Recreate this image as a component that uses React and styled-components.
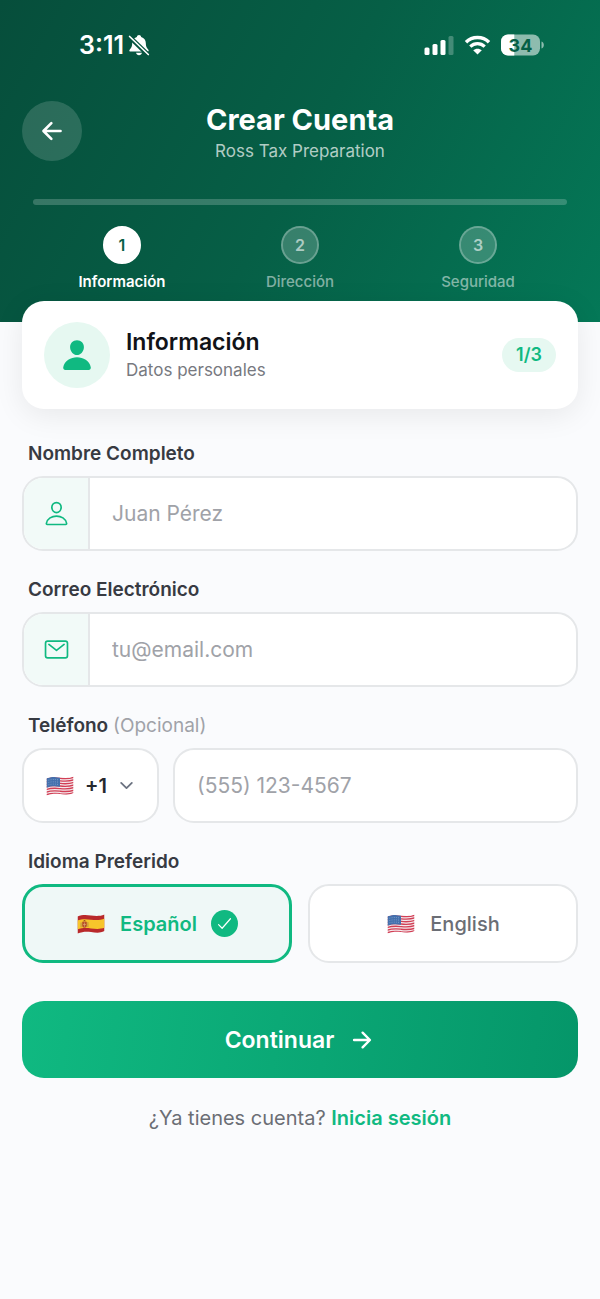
import { useState } from 'react';
import styled, { createGlobalStyle, css } from 'styled-components';
import {
  IoArrowBack,
  IoArrowForward,
  IoCheckmark,
  IoChevronDown,
  IoMailOutline,
  IoPerson,
  IoPersonOutline,
} from 'react-icons/io5';


const GlobalStyle = createGlobalStyle`
  * {
    box-sizing: border-box;
  }

  body {
    margin: 0;
    background: #fafbfd;
    font-family: Inter, 'Noto Sans', sans-serif;
    color: #374151;
  }

  button, input, select {
    font-family: inherit;
  }
`;

const Page = styled.div`
  min-height: 100vh;
  background: #fafbfd;
`;

const Header = styled.header`
  height: 322px;
  display: flex;
  flex-direction: column;
  background: linear-gradient(118deg, #064e3b 0%, #065f46 50%, #047857 100%);
  color: #ffffff;
`;

const StatusBar = styled.div`
  display: flex;
  justify-content: space-between;
  align-items: center;
  height: 89px;
  padding: 0 56px 0 79px;
`;

const StatusGroup = styled.div`
  display: flex;
  align-items: center;
  gap: ${(props) => props.$gap};
`;

const Clock = styled.time`
  font-size: 25px;
  font-weight: 600;
  line-height: 28px;
`;

const TitleBar = styled.div`
  display: grid;
  grid-template-columns: 60px 1fr 60px;
  align-items: center;
  height: 84px;
  padding: 0 22px;
`;

const BackButton = styled.button`
  display: flex;
  align-items: center;
  justify-content: center;
  width: 60px;
  height: 60px;
  padding: 0;
  border: none;
  border-radius: 50%;
  background: rgba(255, 255, 255, 0.15);
  color: #ffffff;
  font-size: 28px;
  cursor: pointer;
`;

const Heading = styled.div`
  padding-top: 4px;
  text-align: center;
`;

const Title = styled.h1`
  margin: 0;
  font-size: 29px;
  font-weight: 700;
  line-height: 36px;
`;

const Subtitle = styled.p`
  margin: 0;
  font-size: 17px;
  line-height: 26px;
  color: rgba(255, 255, 255, 0.7);
`;

const Progress = styled.div`
  height: 6px;
  margin: 26px 33px 21px;
  border-radius: 3px;
  background: rgba(255, 255, 255, 0.2);
`;

const Steps = styled.ol`
  display: grid;
  grid-template-columns: repeat(3, 1fr);
  margin: 0;
  padding: 0 33px;
  list-style: none;
`;

const Step = styled.li`
  display: flex;
  flex-direction: column;
  align-items: center;
  gap: 8px;
  font-size: 15px;
  line-height: 20px;
  font-weight: ${(props) => (props.$active ? 600 : 500)};
  color: ${(props) => (props.$active ? '#ffffff' : 'rgba(255, 255, 255, 0.5)')};
`;

const StepNumber = styled.span`
  display: flex;
  align-items: center;
  justify-content: center;
  width: 38px;
  height: 38px;
  border: 2px solid rgba(255, 255, 255, 0.4);
  border-radius: 50%;
  background: rgba(255, 255, 255, 0.2);
  background-clip: padding-box;
  font-size: 16px;
  font-weight: 600;
  color: rgba(255, 255, 255, 0.6);

  ${(props) => props.$active && css`
    border-color: #ffffff;
    background: #ffffff;
    color: #065f46;
  `}
`;

const Content = styled.main`
  position: relative;
  margin-top: -21px;
  padding: 0 22px 40px;
`;

const StepCard = styled.section`
  display: flex;
  align-items: center;
  gap: 16px;
  padding: 21px 22px;
  border-radius: 22px;
  background: #ffffff;
  box-shadow: 0 6px 30px rgba(0, 0, 0, 0.08);
`;

const Avatar = styled.div`
  display: flex;
  align-items: center;
  justify-content: center;
  width: 66px;
  height: 66px;
  border-radius: 50%;
  background: #e6f8f1;
  color: #10b981;
  font-size: 34px;
`;

const CardText = styled.div`
  flex: 1;
`;

const CardTitle = styled.h2`
  margin: 0;
  font-size: 23px;
  font-weight: 600;
  line-height: 30px;
  color: #111318;
`;

const CardDetail = styled.p`
  margin: 0;
  font-size: 17px;
  line-height: 26px;
  color: #77797f;
`;

const Badge = styled.span`
  padding: 0 14px;
  border-radius: 17px;
  background: #e6f8f1;
  color: #10b981;
  font-size: 18px;
  font-weight: 600;
  line-height: 34px;
`;

const Form = styled.form`
  display: flex;
  flex-direction: column;
  gap: 23px;
  padding-top: 29px;
`;

const Field = styled.div`
  display: flex;
  flex-direction: column;
  gap: 7px;
`;

const labelText = css`
  padding: 0 6px;
  font-size: 19px;
  font-weight: 600;
  line-height: 31px;
  color: #373a42;
`;

const Label = styled.label`
  ${labelText}
`;

const Optional = styled.span`
  font-weight: 400;
  color: #a0a2a8;
`;

const InputBox = styled.div`
  display: flex;
  width: 100%;
  min-width: 0;
  height: 75px;
  border: 2px solid #e5e7e9;
  border-radius: 21px;
  background: #ffffff;
  overflow: hidden;

  &:focus-within {
    border-color: #10b981;
  }
`;

const InputIcon = styled.span`
  display: flex;
  align-items: center;
  justify-content: center;
  width: 66px;
  border-right: 2px solid #e5e7e9;
  background: #f2faf8;
  color: #10b981;
  font-size: 27px;
`;

const Input = styled.input`
  flex: 1;
  min-width: 0;
  padding: 0 22px;
  border: none;
  outline: none;
  background: transparent;
  font-size: 21px;
  color: #1f2937;

  &::placeholder {
    color: #a0a2a8;
    opacity: 1;
  }
`;

const PhoneRow = styled.div`
  display: flex;
  gap: 14px;
`;

const CountryBox = styled.div`
  display: flex;
  flex-shrink: 0;
  align-items: center;
  height: 75px;
  padding: 0 21px;
  border: 2px solid #e5e7e9;
  border-radius: 21px;
  background: #ffffff;
  color: #6b7280;
  font-size: 19px;
`;

const CountrySelect = styled.select`
  appearance: none;
  margin: 0 10px;
  padding: 0;
  border: none;
  background: transparent;
  font-size: 20px;
  font-weight: 600;
  color: #25282e;
  cursor: pointer;
`;

const Languages = styled.fieldset`
  display: grid;
  grid-template-columns: 1fr 1fr;
  column-gap: 16px;
  margin: 0;
  padding: 0;
  border: none;
`;

const Legend = styled.legend`
  ${labelText}
  margin-bottom: 7px;
`;

const LanguageOption = styled.label`
  display: flex;
  align-items: center;
  justify-content: center;
  gap: 14px;
  height: 79px;
  border: ${(props) => (props.$selected ? '3px solid #10b981' : '2px solid #e5e7e9')};
  border-radius: 21px;
  background: ${(props) => (props.$selected ? '#eff8f7' : '#ffffff')};
  color: ${(props) => (props.$selected ? '#10b981' : '#6b6e75')};
  font-size: 20px;
  font-weight: ${(props) => (props.$selected ? 600 : 500)};
  cursor: pointer;
`;

const Radio = styled.input`
  appearance: none;
  position: absolute;
  margin: 0;
`;

const CheckMark = styled.span`
  display: flex;
  align-items: center;
  justify-content: center;
  width: 27px;
  height: 27px;
  border-radius: 50%;
  background: #10b981;
  color: #ffffff;
  font-size: 19px;
`;

const SubmitButton = styled.button`
  display: flex;
  align-items: center;
  justify-content: center;
  gap: 15px;
  height: 77px;
  margin-top: 15px;
  border: none;
  border-radius: 22px;
  background: linear-gradient(98deg, #10b981, #059669);
  color: #ffffff;
  font-size: 23px;
  font-weight: 600;
  cursor: pointer;

  svg {
    font-size: 26px;
  }
`;

const Footer = styled.p`
  margin: 0;
  padding-top: 25px;
  text-align: center;
  font-size: 20px;
  line-height: 30px;
  color: #6b6e75;
`;

const LoginLink = styled.a`
  font-weight: 600;
  color: #10b981;
  text-decoration: none;
`;


const BellOffIcon = () => (
  <svg width="22" height="22" viewBox="0 0 22 22" fill="none" aria-hidden="true">
    <path
      d="M11 1c1.200 0 2 .8 2.200 1.900 2.900.9 4.600 3.200 4.600 6 0 3.700.9 5 2.400 6.500.9 1 .4 2.100-.8 2.100H2.600c-1.200 0-1.700-1.100-.8-2.100C3.300 13.900 4.200 12.600 4.200 8.900c0-2.800 1.700-5.100 4.600-6C9 1.800 9.800 1 11 1z"
      fill="#fff"
    />
    <path d="M8 18.800h6c-.4 1.500-1.500 2.400-3 2.400s-2.600-.9-3-2.400z" fill="#fff" />
    <path d="M0.500 3.500 19 21.500" stroke="#06543f" strokeWidth="2.200" />
    <path d="M2 2.300 20.700 20.300" stroke="#06543f" strokeWidth="3.200" />
    <path d="M1.600 2.500 20.300 20.500" stroke="#fff" strokeWidth="1.700" strokeLinecap="round" />
  </svg>
);

const SignalIcon = () => (
  <svg width="30" height="20" viewBox="0 0 30 20" fill="#fff" aria-hidden="true">
    <rect x="0.500" y="12.500" width="5" height="7.500" rx="1.500" />
    <rect x="8.500" y="9" width="5" height="11" rx="1.500" />
    <rect x="16.500" y="5" width="5" height="15" rx="1.500" />
    <rect x="24.500" y="1" width="5" height="19" rx="1.500" opacity="0.250" />
  </svg>
);

const WifiIcon = () => (
  <svg width="27" height="20" viewBox="0 0 27 20" fill="none" aria-hidden="true">
    <path d="M2 7.200C8.200.9 18.800.9 25 7.200" stroke="#fff" strokeWidth="3.400" />
    <path d="M6.300 11.700c4-4 10.400-4 14.400 0" stroke="#fff" strokeWidth="3.200" />
    <path d="M13.500 19.600 9.200 15.300c2.400-2.200 6.200-2.200 8.600 0z" fill="#fff" />
  </svg>
);

const BatteryIcon = ({ level }) => (
  <svg width="43" height="22" viewBox="0 0 43 22" role="img" aria-label={`${level}%`}>
    <clipPath id="battery-shape">
      <rect x="0" y="0.500" width="39" height="21" rx="7" />
    </clipPath>
    <g clipPath="url(#battery-shape)">
      <rect width="39" height="22" fill="#fff" opacity="0.550" />
      <rect width={(39 * level) / 100} height="22" fill="#fff" />
    </g>
    <path d="M40.500 7.500c1.500.5 2.300 1.800 2.300 3.500s-.8 3-2.300 3.500z" fill="#fff" opacity="0.550" />
    <text x="19.500" y="17.500" textAnchor="middle" fontSize="18" fontWeight="700" fill="#065f46">
      {level}
    </text>
  </svg>
);

const WAVE = 'M1 3.500C6 1.500 10 2 14.500 2.500S23 3.500 28 1.500v16.500c-5 2.500-9 1.500-13.500 1S6 18.500 1 20.500z';

const UsFlag = () => (
  <svg width="30" height="22" viewBox="0 0 29 22" aria-hidden="true">
    <clipPath id="us-wave">
      <path d={WAVE} />
    </clipPath>
    <g clipPath="url(#us-wave)">
      <rect width="29" height="22" fill="#f4e9ec" />
      {[0, 1, 2, 3, 4, 5, 6].map((i) => (
        <path
          key={i}
          d={`M0 ${4.400 + i * 2.600}C6 ${2.200 + i * 2.600} 10 ${2.700 + i * 2.600} 14.500 ${3.200 + i * 2.600}S23 ${4.200 + i * 2.600} 29 ${2 + i * 2.600}`}
          fill="none"
          stroke="#d23f55"
          strokeWidth="1.350"
        />
      ))}
      <path d="M0 3.500C6 1.500 10 2 14.500 2.500V11.700C10 11 6 10.500 0 13z" fill="#4470ad" />
      <path
        d="M3 5.200c3-.8 6-.9 10-.3M3 7.500c3-.8 6-.9 10-.3M3 9.800c3-.8 6-.9 10-.3"
        fill="none"
        stroke="#9db7dc"
        strokeWidth="0.700"
        strokeDasharray="0.800 1.400"
      />
    </g>
  </svg>
);

const SpainFlag = () => (
  <svg width="30" height="22" viewBox="0 0 29 22" aria-hidden="true">
    <clipPath id="es-wave">
      <path d={WAVE} />
    </clipPath>
    <g clipPath="url(#es-wave)">
      <rect width="29" height="22" fill="#b9292b" />
      <path d="M0 7.800C6 5.500 10 6.200 14.500 6.700S23 7.700 29 5.400v9c-6 2.300-10 1.500-14.500 1S6 14.500 0 16.800z" fill="#f7c52b" />
      <path d="M5.700 8.700h4.600v3.900c0 1.500-.9 2.200-2.300 2.200s-2.300-.7-2.300-2.200z" fill="#b5512b" />
      <path d="M6.300 8.300 8 6.900l1.700 1.400z" fill="#8f3a24" />
      <path d="M4.600 9.500v4.800M11.400 9.200v4.800" stroke="#b08a48" strokeWidth="0.900" />
      <path d="M8 9.500v4.300M6.500 11.500h3" stroke="#e6b27a" strokeWidth="0.600" />
    </g>
  </svg>
);


const STEPS = ['Información', 'Dirección', 'Seguridad'];

const LANGUAGES = [
  { id: 'es', name: 'Español', Flag: SpainFlag },
  { id: 'en', name: 'English', Flag: UsFlag },
];

const App = () => {
  const [language, setLanguage] = useState('es');
  const current = 0;

  return (
    <Page>
      <GlobalStyle />
      <Header>
        <StatusBar>
          <StatusGroup $gap="4px">
            <Clock>3:11</Clock>
            <BellOffIcon />
          </StatusGroup>
          <StatusGroup $gap="10px">
            <SignalIcon />
            <WifiIcon />
            <BatteryIcon level={34} />
          </StatusGroup>
        </StatusBar>

        <TitleBar>
          <BackButton type="button" aria-label="Volver">
            <IoArrowBack />
          </BackButton>
          <Heading>
            <Title>Crear Cuenta</Title>
            <Subtitle>Ross Tax Preparation</Subtitle>
          </Heading>
        </TitleBar>

        <Progress />
        <Steps>
          {STEPS.map((name, i) => (
            <Step key={name} $active={i === current}>
              <StepNumber $active={i === current}>{i + 1}</StepNumber>
              {name}
            </Step>
          ))}
        </Steps>
      </Header>

      <Content>
        <StepCard>
          <Avatar>
            <IoPerson />
          </Avatar>
          <CardText>
            <CardTitle>Información</CardTitle>
            <CardDetail>Datos personales</CardDetail>
          </CardText>
          <Badge>1/3</Badge>
        </StepCard>

        <Form onSubmit={(e) => e.preventDefault()}>
          <Field>
            <Label htmlFor="name">Nombre Completo</Label>
            <InputBox>
              <InputIcon>
                <IoPersonOutline />
              </InputIcon>
              <Input id="name" type="text" placeholder="Juan Pérez" />
            </InputBox>
          </Field>

          <Field>
            <Label htmlFor="email">Correo Electrónico</Label>
            <InputBox>
              <InputIcon>
                <IoMailOutline />
              </InputIcon>
              <Input id="email" type="email" placeholder="tu@email.com" />
            </InputBox>
          </Field>

          <Field>
            <Label htmlFor="phone">
              Teléfono <Optional>(Opcional)</Optional>
            </Label>
            <PhoneRow>
              <CountryBox>
                <UsFlag />
                <CountrySelect aria-label="Código de país" defaultValue="+1">
                  <option value="+1">+1</option>
                </CountrySelect>
                <IoChevronDown />
              </CountryBox>
              <InputBox>
                <Input id="phone" type="tel" placeholder="(555) 123-4567" />
              </InputBox>
            </PhoneRow>
          </Field>

          <Languages>
            <Legend>Idioma Preferido</Legend>
            {LANGUAGES.map(({ id, name, Flag }) => (
              <LanguageOption key={id} $selected={language === id}>
                <Radio
                  type="radio"
                  name="language"
                  value={id}
                  checked={language === id}
                  onChange={() => setLanguage(id)}
                />
                <Flag />
                {name}
                {language === id && (
                  <CheckMark>
                    <IoCheckmark />
                  </CheckMark>
                )}
              </LanguageOption>
            ))}
          </Languages>

          <SubmitButton type="submit">
            Continuar
            <IoArrowForward />
          </SubmitButton>
        </Form>

        <Footer>
          ¿Ya tienes cuenta? <LoginLink href="#login">Inicia sesión</LoginLink>
        </Footer>
      </Content>
    </Page>
  );
};

export default App;
